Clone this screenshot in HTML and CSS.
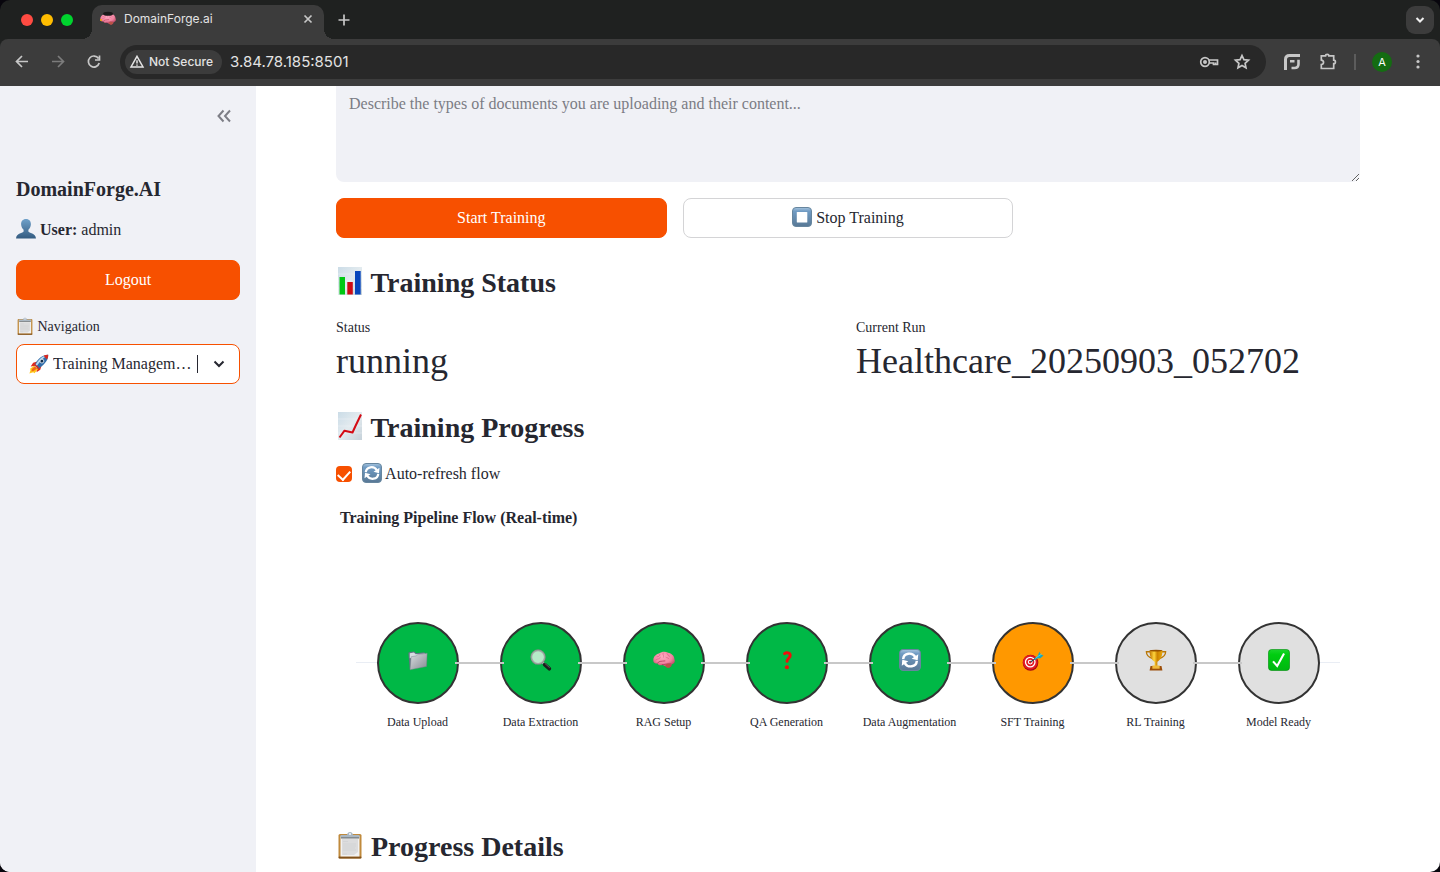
FILE: index.html
```html
<!DOCTYPE html>
<html lang="en">
<head>
    <meta charset="UTF-8">
    <meta name="viewport" content="width=device-width, initial-scale=1.0">
    <title>DomainForge.ai</title>
    <link rel="stylesheet" href="styles.css">
</head>
<body>
    <!-- Shared icons -->
    <svg class="defs" aria-hidden="true">
        <defs>
            <linearGradient id="blueKey" x1="0" y1="0" x2="0" y2="1">
                <stop offset="0" stop-color="#a6c4de"/><stop offset=".2" stop-color="#709bc3"/><stop offset="1" stop-color="#587895"/>
            </linearGradient>
            <linearGradient id="person" x1="0" y1="0" x2="0" y2="1">
                <stop offset="0" stop-color="#6fa1ca"/><stop offset="1" stop-color="#345b80"/>
            </linearGradient>
            <linearGradient id="paper" x1="0" y1="0" x2="1" y2="1">
                <stop offset="0" stop-color="#cbdce7"/><stop offset=".5" stop-color="#e3ebef"/><stop offset="1" stop-color="#c5d1d9"/>
            </linearGradient>
            <linearGradient id="silver" x1="0" y1="0" x2="1" y2="1">
                <stop offset="0" stop-color="#dadde1"/><stop offset="1" stop-color="#858b92"/>
            </linearGradient>
            <linearGradient id="gold" x1="0" y1="0" x2="1" y2="0">
                <stop offset="0" stop-color="#bd7200"/><stop offset=".35" stop-color="#ffd53c"/><stop offset=".6" stop-color="#cb8200"/><stop offset="1" stop-color="#e9a90c"/>
            </linearGradient>
            <linearGradient id="green" x1="0" y1="0" x2="0" y2="1">
                <stop offset="0" stop-color="#1bd52b"/><stop offset=".25" stop-color="#00cd10"/><stop offset="1" stop-color="#00b711"/>
            </linearGradient>
            <radialGradient id="pink" cx=".45" cy=".3" r=".7">
                <stop offset="0" stop-color="#ffabc1"/><stop offset=".6" stop-color="#f285a2"/><stop offset="1" stop-color="#b9405f"/>
            </radialGradient>
        </defs>

        <symbol id="icon-brain" viewBox="0 0 24 24">
            <path fill="url(#pink)" d="M.5 13.500C-.5 9 3 5.500 6.500 4.800 9.500 2.500 14 2.300 16.500 4.200 20.500 4.700 23.500 8 23.300 11 24.500 13.500 23.500 16 20.500 16.500c0 3.200-3 4.500-5.500 3.200C12.500 18.700 11.800 17.500 10 17.500c-2.500.8-4.500 0-5-1.700C3 16 1 15.300.5 13.500z"/>
            <path fill="none" stroke="#d2547a" stroke-width=".6" stroke-linecap="round" d="M4.500 8.500c2 0 3-1 3-2.500M3 12c2.500-2 4.500-.5 5-3M11 4.500c-1 2 1.500 2.300.5 4.500M15 4.500c2 1 .5 3 3 3.500M14 9c1 1 2.500 0 3 1.500"/>
            <path fill="none" stroke="#b03c5c" stroke-width=".9" stroke-linecap="round" d="M5 15.500c1-2.500 3.500-2 8-2.500M10 17c3 .5 5-1.500 9.500-.8"/>
            <path fill="#b95346" d="M14 17c2-1.300 4.500-.8 5.500.3.200 3-2.800 4-5 2.700-1-.7-1-2-.5-3z"/>
        </symbol>

        <symbol id="icon-user" viewBox="0 0 20 20">
            <path fill="url(#person)" d="M10 0c3.300 0 5 2.300 4.900 5.300-.1 2.500-1.200 4.600-2.500 5.500v1.700c.4 1.700 7.300 1.600 7.500 6.500v.5H.1V19c.2-4.900 7.100-4.800 7.500-6.500v-1.700C6.300 9.900 5.200 7.800 5.100 5.300 5 2.300 6.700 0 10 0z"/>
        </symbol>

        <symbol id="icon-clipboard" viewBox="0 0 28 28">
            <rect x="2.500" y="3" width="23" height="24.500" rx="1.500" fill="#c08a3c"/>
            <rect x="2.500" y="25.500" width="23" height="2" rx="1" fill="#80511c"/>
            <path fill="#f1f1f1" d="M4.500 5h19v20.500h-19z"/>
            <path fill="#dcdcdd" d="M6 8h16v13l-4 3H6z"/>
            <path stroke="#cbccce" stroke-width=".5" d="M7 10.500h5M7 13h13M7 15h13M7 17h12M7 19h13M7 23h4"/>
            <path fill="#aab7c2" d="M4.500 4H11c.3-2 1.400-3 3-3s2.700 1 3 3h6.500v3h-19z"/>
            <path fill="#727779" d="M5 6.300h18v1.200H5z"/>
            <circle cx="14" cy="3" r="1" fill="#f5f7fb"/>
        </symbol>

        <symbol id="icon-rocket" viewBox="0 0 24 24">
            <path fill="#e02a1d" d="M10 9 5 10.500 2 15l6-1zM15 14l-1.500 5-4.500 3 1-6z"/>
            <path fill="#ffc61a" d="M6 14 1 18l1 1-1.500 4.500L5 22l1.500 1L11 18z"/>
            <path fill="#f26618" d="M7 15 3.500 18l-.5 3 3-1 3.500-2.500z"/>
            <path fill="#326da9" d="M23 1c.5 5-3 11-12 17l-4.500-4.500C11 5 17 .8 23 1z"/>
            <path fill="#b8d8ef" d="M22 1.500C16 2 11.500 6.500 7.500 13.500l1.500 1.300C13 9 17 5 22 1.500z"/>
            <path fill="#d92920" d="M23 1c.1 2-.3 3.800-1.300 5.500L17.500 2C19.300 1.200 21.200.9 23 1zM7.500 12l4.500 4.500-1 1.500-4.500-4.500z"/>
            <circle cx="15.500" cy="8.500" r="2.300" fill="#132c48" stroke="#e9f2fa"/>
        </symbol>

        <symbol id="icon-stop" viewBox="0 0 20 20">
            <rect x=".5" y=".5" width="19" height="19" rx="3.500" fill="url(#blueKey)" stroke="#67869f"/>
            <rect x="4.800" y="5" width="10.500" height="10.500" rx=".6" fill="#fff"/>
        </symbol>

        <symbol id="icon-refresh" viewBox="0 0 20 20">
            <rect x=".5" y=".5" width="19" height="19" rx="3.500" fill="url(#blueKey)" stroke="#67869f"/>
            <path fill="none" stroke="#fff" stroke-width="2.200" d="M3.800 9.200C4.200 3.500 12 2.500 14.800 7.200M16.200 10.800C15.800 16.500 8 17.500 5.200 12.800"/>
            <path fill="#fff" d="m17.500 4.800-.5 5.400-5.500-1.400zM2.500 15.200l.5-5.400 5.500 1.400z"/>
        </symbol>

        <symbol id="icon-bars" viewBox="0 0 28 28">
            <path fill="url(#paper)" d="M2 0h24v28H2z"/>
            <path stroke="#f2f6f8" stroke-width=".4" d="M2 7h24M2 14h24M2 21h24"/>
            <path fill="#00c713" d="M3.500 10H9v17.500H3.500z"/>
            <path fill="#ce0b14" d="M11.300 15h5.500v12.500h-5.500z"/>
            <path fill="#0846bc" d="M19 4h5.700v23.500H19z"/>
        </symbol>

        <symbol id="icon-trend" viewBox="0 0 28 28">
            <path fill="url(#paper)" d="M2 0h24v28H2z"/>
            <path stroke="#f2f6f8" stroke-width=".4" d="M2 7h24M2 14h24M2 21h24"/>
            <path fill="none" stroke="#d40b14" stroke-width="2" stroke-linejoin="round" d="m3.500 25.500 5-6.800 8 1.800 3.200-7L25 2.500"/>
        </symbol>

        <symbol id="icon-folder" viewBox="0 0 24 24">
            <path fill="#637484" d="M1.500 5c0-1 .5-1.500 1.500-1.600l5-.7 2 1.800 9-1 .7 2L5 21.500l-2 .5z"/>
            <path fill="#d8dde2" d="M3 4.500 7.500 3.800l2 2 10-1v3L3 10z"/>
            <path fill="url(#silver)" stroke="#75808a" stroke-width=".5" d="m4.500 8.500 5.500-1 1.500-1.200L22 4.500l-.7 14.500L3.300 22.700z"/>
        </symbol>

        <symbol id="icon-search" viewBox="0 0 24 24">
            <path stroke="#b8bdc0" stroke-width="2.500" d="m13.500 14.500 3 3"/>
            <path stroke="#1b1d1d" stroke-width="4" stroke-linecap="round" d="m16 17 5 4.500"/>
            <path stroke="#777" stroke-width=".8" d="m16 15.500 5.500 5"/>
            <circle cx="8.800" cy="8.800" r="7.300" fill="#b6eac8" stroke="#a1a9a4" stroke-width="1.800"/>
            <circle cx="8.800" cy="8.800" r="8.100" fill="none" stroke="#67756d" stroke-width=".5"/>
        </symbol>

        <symbol id="icon-target" viewBox="0 0 24 24">
            <ellipse cx="9.300" cy="15" rx="8.500" ry="8.700" fill="#a70912"/>
            <ellipse cx="9" cy="14.500" rx="8" ry="8" fill="#e11a24"/>
            <circle cx="9" cy="14.300" r="5.200" fill="none" stroke="#fff" stroke-width="1.400"/>
            <circle cx="9" cy="14.300" r="2.100" fill="none" stroke="#fff" stroke-width="1.200"/>
            <path stroke="#0f4651" stroke-width="1.200" d="m9.500 14 9-6.500"/>
            <path fill="#18a8bd" d="m13.500 10.500 3.500-3 2-4.500 1.500 3 3 1-3.500 3-3 .2-2.500 1.800z"/>
            <path stroke="#7ce2ec" stroke-width=".7" d="m14.500 10 7-4.500"/>
        </symbol>

        <symbol id="icon-trophy" viewBox="0 0 24 24">
            <path fill="none" stroke="#b97808" stroke-width="1.400" d="M6 3H1.500c0 4 2.500 6 6.500 7.500M18 3h4.500c0 4-2.500 6-6.500 7.500"/>
            <path fill="url(#gold)" d="M5 1.500h14c0 7-2 10-5.500 12.500v4.500h-3V14C7 11.500 5 8.500 5 1.500z"/>
            <ellipse cx="12" cy="1.800" rx="7" ry="1" fill="#945100"/>
            <path fill="#9c4e0a" d="M6 18.500h12l1 5H5z"/>
            <path fill="#efba3c" d="M8 18h8v3.500H8z"/>
        </symbol>

        <symbol id="icon-question" viewBox="0 0 24 24">
            <path fill="none" stroke="#f00e0c" stroke-width="3.200" stroke-linecap="round" d="M9.300 5c2-1.500 6.200-1.200 6.200 2 0 3-3.300 3.300-3.500 6.500"/>
            <circle cx="11.900" cy="20" r="2.200" fill="#f00e0c"/>
        </symbol>

        <symbol id="icon-check" viewBox="0 0 24 24">
            <rect x=".5" y=".5" width="23" height="23" rx="3.500" fill="url(#green)" stroke="#008d0e" stroke-width=".7"/>
            <path fill="none" stroke="#fff" stroke-width="2.300" d="m5.500 13.500 4.500 5 7.500-13.500"/>
        </symbol>
    </svg>

    <div class="window">
        <header class="browser">
            <div class="tab-strip">
                <div class="lights"><i class="red"></i><i class="yellow"></i><i class="green"></i></div>
                <div class="tab">
                    <svg class="favicon" viewBox="0 0 16 16">
                        <use href="#icon-brain" width="16" height="16"/>
                        <ellipse cx="8" cy="2.800" rx="5" ry="2" fill="#1a1a1a"/>
                        <circle cx="1" cy="9" r="1" fill="#f0a800"/>
                    </svg>
                    <span class="tab-title">DomainForge.ai</span>
                    <button class="icon-button" aria-label="Close tab">
                        <svg width="16" height="16" viewBox="0 0 16 16"><path d="m4.500 4.500 7 7m0-7-7 7"/></svg>
                    </button>
                </div>
                <button class="icon-button new-tab" aria-label="New tab">
                    <svg width="16" height="16" viewBox="0 0 16 16"><path d="M8 2.500v11M2.500 8h11"/></svg>
                </button>
                <button class="icon-button tab-search" aria-label="Search tabs">
                    <svg width="16" height="16" viewBox="0 0 16 16"><path stroke-width="2" d="m4.500 6 3.500 3.500L11.500 6"/></svg>
                </button>
            </div>

            <div class="toolbar">
                <nav class="history">
                    <button class="icon-button" aria-label="Back"><svg width="16" height="16" viewBox="0 0 16 16"><path d="M14 7.500H3M8 2 2.500 7.500 8 13"/></svg></button>
                    <button class="icon-button" aria-label="Forward" disabled><svg width="16" height="16" viewBox="0 0 16 16"><path d="M2 7.500h11M8 2l5.500 5.500L8 13"/></svg></button>
                    <button class="icon-button" aria-label="Reload"><svg width="16" height="16" viewBox="0 0 16 16"><path d="M13.200 9A5.500 5.500 0 1 1 12.500 4.500M13.500 1.500V6H9"/></svg></button>
                </nav>

                <div class="address-bar">
                    <button class="security">
                        <svg width="16" height="16" viewBox="0 0 16 16"><path stroke-width="1.500" d="M8 2.300 14 13H2zM8 6.300v3.200M8 10.500v1.300"/></svg>
                        Not Secure
                    </button>
                    <input class="url" type="text" value="3.84.78.185:8501" aria-label="Address">
                    <button class="icon-button" aria-label="Passwords">
                        <svg width="20" height="20" viewBox="0 0 20 20"><circle cx="6" cy="10" r="4.300"/><circle class="solid" cx="6" cy="10" r="2"/><path d="M9.800 8H18.500v4.500h-4V11H10M16.500 10.500v2"/></svg>
                    </button>
                    <button class="icon-button" aria-label="Bookmark">
                        <svg width="18" height="18" viewBox="0 0 18 18"><path d="m9 2.500 1.900 4.200 4.600.5-3.400 3.100.9 4.500-4-2.300-4 2.300.9-4.500-3.400-3.100 4.600-.5z"/></svg>
                    </button>
                </div>

                <div class="extensions">
                    <button class="icon-button" aria-label="Extension">
                        <svg width="18" height="18" viewBox="0 0 18 18"><path stroke-width="3" d="M2.500 17V6.500q0-4 4-4H17"/><path stroke-width="2.600" d="M7 8.200h4.500M15.500 6.800V11q0 4-4 4H8.500"/></svg>
                    </button>
                    <button class="icon-button" aria-label="Extensions">
                        <svg width="18" height="18" viewBox="0 0 18 18"><path d="M2.300 2.800h4.200c0-2 3.400-2 3.400 0h4.800v4.400c2.300 0 2.300 3.400 0 3.400v4.900H2.300v-4c3-.3 3-4.100 0-4.400z"/></svg>
                    </button>
                    <span class="divider"></span>
                    <button class="avatar" aria-label="Profile">A</button>
                    <button class="icon-button" aria-label="Menu">
                        <svg width="16" height="16" viewBox="0 0 16 16"><g class="solid"><circle cx="8" cy="2" r="1.600"/><circle cx="8" cy="7.500" r="1.600"/><circle cx="8" cy="13" r="1.600"/></g></svg>
                    </button>
                </div>
            </div>
        </header>

        <div class="page">
            <aside class="sidebar">
                <button class="collapse" aria-label="Collapse sidebar">
                    <svg width="24" height="24" viewBox="0 0 24 24"><path d="m11.500 6.500-5 5.500 5 5.500M18 6.500l-5 5.500 5 5.500"/></svg>
                </button>
                <h1>DomainForge.AI</h1>
                <p class="user"><svg class="emoji"><use href="#icon-user"/></svg> <strong>User:</strong> admin</p>
                <button class="button primary">Logout</button>
                <label class="nav-label" for="navigation"><svg class="emoji small"><use href="#icon-clipboard"/></svg> Navigation</label>
                <div class="select">
                    <svg class="emoji"><use href="#icon-rocket"/></svg>
                    <select id="navigation">
                        <option>Training Management</option>
                    </select>
                    <span class="caret"></span>
                    <svg class="chevron" width="16" height="16" viewBox="0 0 16 16"><path d="m3.500 5.500 4.500 4.500 4.500-4.500"/></svg>
                </div>
            </aside>

            <main class="content">
                <textarea class="description" aria-label="Document description" placeholder="Describe the types of documents you are uploading and their content..."></textarea>

                <div class="actions">
                    <button class="button primary">Start Training</button>
                    <button class="button"><svg class="emoji"><use href="#icon-stop"/></svg> Stop Training</button>
                </div>

                <h2><svg class="emoji large"><use href="#icon-bars"/></svg> Training Status</h2>
                <dl class="metrics">
                    <div>
                        <dt>Status</dt>
                        <dd>running</dd>
                    </div>
                    <div>
                        <dt>Current Run</dt>
                        <dd>Healthcare_20250903_052702</dd>
                    </div>
                </dl>

                <h2><svg class="emoji large"><use href="#icon-trend"/></svg> Training Progress</h2>
                <label class="checkbox">
                    <input type="checkbox" checked>
                    <span><svg class="emoji"><use href="#icon-refresh"/></svg> Auto-refresh flow</span>
                </label>

                <section class="chart">
                    <h3>Training Pipeline Flow (Real-time)</h3>
                    <ol class="pipeline">
                        <li class="done"><div class="node"><svg><use href="#icon-folder"/></svg></div>Data Upload</li>
                        <li class="done"><div class="node"><svg><use href="#icon-search"/></svg></div>Data Extraction</li>
                        <li class="done"><div class="node"><svg><use href="#icon-brain"/></svg></div>RAG Setup</li>
                        <li class="done"><div class="node"><svg><use href="#icon-question"/></svg></div>QA Generation</li>
                        <li class="done"><div class="node"><svg><use href="#icon-refresh"/></svg></div>Data Augmentation</li>
                        <li class="active"><div class="node"><svg><use href="#icon-target"/></svg></div>SFT Training</li>
                        <li><div class="node"><svg><use href="#icon-trophy"/></svg></div>RL Training</li>
                        <li><div class="node"><svg><use href="#icon-check"/></svg></div>Model Ready</li>
                    </ol>
                </section>

                <h2><svg class="emoji large"><use href="#icon-clipboard"/></svg> Progress Details</h2>
            </main>
        </div>
    </div>
</body>
</html>
```

FILE: styles.css
```css
* {
    box-sizing: border-box;
}

body {
    margin: 0;
    background: #08060d;
    color: #262730;
    font-family: "Liberation Serif", "Times New Roman", serif;
    font-size: 16px;
    line-height: 24px;
}

button,
input,
select,
textarea {
    font: inherit;
    color: inherit;
}

button {
    cursor: pointer;
}

.defs {
    position: absolute;
    width: 0;
    height: 0;
}

.window {
    display: flex;
    flex-direction: column;
    height: 100vh;
    overflow: hidden;
    border-radius: 10px;
}

/* Browser bar */
.browser {
    flex: none;
    background: #1f2120;
    color: #e3e3e3;
    font-family: Inter, sans-serif;
    font-size: 12px;
}

.tab-strip {
    display: flex;
    align-items: center;
    height: 39px;
    padding: 0 6px 0 21px;
}

.lights {
    display: flex;
    gap: 8px;
    margin-right: 19px;
}

.lights i {
    width: 12px;
    height: 12px;
    border-radius: 50%;
}

.red {
    background: #ff4b42;
}

.yellow {
    background: #ffbd00;
}

.green {
    background: #00d42e;
}

.tab {
    position: relative;
    display: flex;
    align-items: center;
    align-self: flex-end;
    gap: 8px;
    width: 232px;
    height: 34px;
    padding: 0 8px 6px;
    background: #3c3c3c;
    border-radius: 10px 10px 0 0;
}

.tab::before,
.tab::after {
    content: "";
    position: absolute;
    bottom: 0;
    width: 10px;
    height: 10px;
}

.tab::before {
    right: 100%;
    background: radial-gradient(circle at 0 0, transparent 10px, #3c3c3c 10px);
}

.tab::after {
    left: 100%;
    background: radial-gradient(circle at 100% 0, transparent 10px, #3c3c3c 10px);
}

.favicon {
    width: 16px;
    height: 16px;
}

.tab-title {
    flex: 1;
}

.icon-button {
    display: flex;
    align-items: center;
    justify-content: center;
    padding: 0;
    border: none;
    background: none;
    color: #c7c7c7;
}

.icon-button:disabled {
    color: #7c7c7c;
}

.toolbar svg path,
.toolbar svg circle,
.tab-strip button path {
    fill: none;
    stroke: currentColor;
}

.icon-button svg {
    stroke-width: 1.7;
}

.toolbar svg .solid,
.toolbar svg .solid circle {
    fill: currentColor;
    stroke: none;
}

.new-tab {
    margin-left: 12px;
}

.tab-search {
    width: 28px;
    height: 28px;
    margin-left: auto;
    border-radius: 9px;
    background: #3c3c3c;
    color: #f0f0f0;
}

.toolbar {
    display: flex;
    align-items: center;
    height: 47px;
    padding: 0 14px 1px;
    background: #3c3c3c;
    border-radius: 8px 8px 0 0;
}

.history {
    display: flex;
    gap: 20px;
    margin-right: 18px;
}

.address-bar {
    flex: 1;
    display: flex;
    align-items: center;
    gap: 14px;
    height: 34px;
    padding: 0 15px 0 5px;
    border-radius: 17px;
    background: #282828;
}

.security {
    display: flex;
    align-items: center;
    gap: 4px;
    height: 24px;
    padding: 0 9px 0 4px;
    border: none;
    border-radius: 12px;
    background: #3c3c3c;
    font-weight: 500;
}

.url {
    flex: 1;
    min-width: 0;
    margin-left: -6px;
    padding: 0;
    border: none;
    outline: none;
    background: none;
    font-size: 15px;
}

.extensions {
    display: flex;
    align-items: center;
    gap: 18px;
    margin-left: 17px;
}

.divider {
    width: 2px;
    height: 16px;
    margin-left: -1px;
    background: #5c5c5c;
}

.avatar {
    width: 20px;
    height: 20px;
    margin: 0 10px 0 -2px;
    padding: 0;
    border: none;
    border-radius: 50%;
    background: #146c12;
    color: #fff;
    font-size: 11px;
    line-height: 20px;
}

.extensions .avatar + .icon-button {
    margin-left: -10px;
}

/* Page */
.page {
    flex: 1;
    display: flex;
    min-height: 0;
    background: #fff;
}

.emoji {
    width: 20px;
    height: 20px;
    vertical-align: -4px;
}

.emoji.small {
    width: 18px;
    height: 18px;
}

.emoji.large {
    width: 28px;
    height: 28px;
    vertical-align: -3px;
}

.button {
    height: 40px;
    padding: 0 12px;
    border: 1px solid #d4d4d6;
    border-radius: 8px;
    background: #fff;
}

.button.primary {
    border-color: #f75000;
    background: #f75000;
    color: #fff;
}

.sidebar {
    flex: none;
    display: flex;
    flex-direction: column;
    width: 256px;
    padding: 18px 16px;
    background: #f0f1f6;
}

.collapse {
    align-self: flex-end;
    width: 24px;
    height: 24px;
    margin-right: 4px;
    padding: 0;
    border: none;
    background: none;
    color: #7d7e86;
}

.collapse path,
.chevron path {
    fill: none;
    stroke: currentColor;
    stroke-width: 2;
}

.sidebar h1 {
    margin: 49px 0 17px;
    font-size: 20px;
    line-height: 24px;
}

.user {
    margin: 0 0 18px;
}

.nav-label {
    margin: 17px 0 7px;
    font-size: 14px;
    line-height: 20px;
}

.select {
    display: flex;
    align-items: center;
    height: 40px;
    padding: 0 12px;
    border: 1px solid #f75000;
    border-radius: 8px;
    background: #fff;
}

.select .emoji {
    flex: none;
}

.select select {
    flex: 1;
    min-width: 0;
    padding: 0 0 0 4px;
    border: none;
    outline: none;
    appearance: none;
    background: none;
    text-overflow: ellipsis;
}

.caret {
    width: 1px;
    height: 18px;
    margin: 0 13px 0 4px;
    background: #262730;
}

.content {
    flex: 1;
    min-width: 0;
    padding: 0 80px;
    overflow: hidden;
}

.description {
    display: block;
    width: 100%;
    height: 96px;
    margin-bottom: 16px;
    padding: 6px 13px;
    border: none;
    border-radius: 0 0 8px 8px;
    background: #f0f1f6;
    resize: vertical;
}

.description::placeholder {
    color: #7b7c84;
}

.actions {
    display: grid;
    grid-template-columns: repeat(3, 1fr);
    gap: 16px;
}

.content h2 {
    margin: 28px 0 17px;
    font-size: 28px;
    line-height: 34px;
}

.metrics {
    display: grid;
    grid-template-columns: repeat(2, 1fr);
    gap: 16px;
    margin: 0;
}

.metrics dt {
    font-size: 14px;
    line-height: 22px;
}

.metrics dd {
    margin: 0;
    font-size: 36px;
    line-height: 44px;
}

.checkbox {
    display: flex;
    align-items: center;
    gap: 10px;
}

.checkbox input {
    display: flex;
    justify-content: center;
    width: 16px;
    height: 16px;
    margin: 0;
    appearance: none;
    border-radius: 4px;
    background: #f75000;
}

.checkbox input:checked::before {
    content: "";
    width: 6px;
    height: 10px;
    margin-top: 2px;
    border: solid #fff;
    border-width: 0 2px 2px 0;
    transform: rotate(42deg);
}

.chart {
    padding-bottom: 72px;
}

.chart h3 {
    margin: 20px 4px 92px;
    font-size: 16px;
    line-height: 24px;
}

.pipeline {
    display: flex;
    margin: 0 20px;
    padding: 0;
    list-style: none;
    font-size: 12px;
    line-height: 16px;
    text-align: center;
    background: linear-gradient(#e9edf4, #e9edf4) 0 40px / 100% 1px no-repeat;
}

.pipeline li {
    position: relative;
    flex: 1;
}

/* Connector to the next stage */
.pipeline li:not(:last-child)::after {
    content: "";
    position: absolute;
    z-index: 1;
    top: 40px;
    left: calc(50% + 37px);
    width: calc(100% - 74px);
    height: 2px;
    background: #c8c8c8;
}

.node {
    display: flex;
    align-items: center;
    justify-content: center;
    width: 82px;
    height: 82px;
    margin: 0 auto 10px;
    padding-bottom: 6px;
    border: 2px solid #333;
    border-radius: 50%;
    background: #e0e0e0;
}

.node svg {
    width: 22px;
    height: 22px;
}

.done .node {
    background: #00b846;
}

.active .node {
    background: #ff9800;
}
```
